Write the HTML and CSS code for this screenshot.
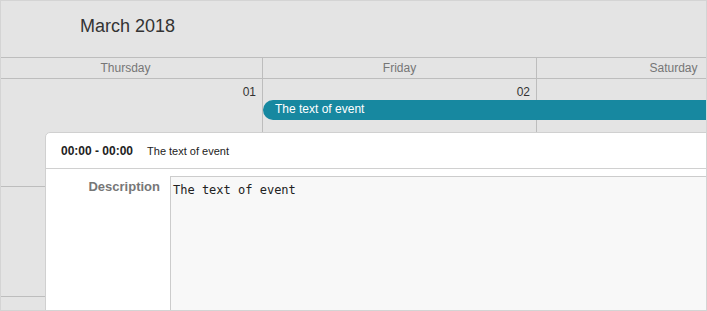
FILE: index.html
```html
<!doctype html>
<html lang="en">

<head>
    <meta charset="UTF-8" />
    <meta name="viewport" content="width=device-width, initial-scale=1.0" />
    <title>Calendar - March 2018</title>
    <link rel="stylesheet" href="styles.css">
</head>

<body>
    <div class="calendar">
        <div class="cal-header">
            <p class="cal-title">March 2018</p>
        </div>
        <div class="day-names">
            <div class="day-name">Thursday</div>
            <div class="day-name">Friday</div>
            <div class="day-name">Saturday</div>
        </div>
        <div class="week week-first">
            <div class="day-cell"><span class="day-number">01</span></div>
            <div class="day-cell"><span class="day-number">02</span></div>
            <div class="day-cell"></div>
            <div class="event-bar">The text of event</div>
        </div>
        <div class="week week-second">
            <div class="day-cell"></div>
            <div class="day-cell"></div>
            <div class="day-cell"></div>
        </div>
        <div class="week">
            <div class="day-cell"></div>
            <div class="day-cell"></div>
            <div class="day-cell"></div>
        </div>

        <div class="event-popup">
            <div class="popup-head">
                <span class="popup-time">00:00 - 00:00</span>
                <span class="popup-text">The text of event</span>
            </div>
            <div class="popup-body">
                <label class="popup-label" for="event-description">Description</label>
                <textarea class="popup-textarea" id="event-description" readonly>The text of event</textarea>
            </div>
        </div>
    </div>
</body>

</html>
```

FILE: styles.css
```css
body {
    font-family: "Liberation Sans", Arial, sans-serif;
    margin: 0;
    padding: 0;
    background-color: #ffffff;
}

.calendar {
    position: relative;
    width: 707px;
    height: 311px;
    box-sizing: border-box;
    border: 1px solid #d4d4d4;
    background-color: #e4e4e4;
    overflow: hidden;
}

.cal-header {
    height: 56px;
    border-bottom: 1px solid #bdbdbd;
    box-sizing: content-box;
}

.cal-title {
    margin: 0;
    padding: 15px 0 0 79px;
    font-size: 18px;
    color: #333333;
}

.day-names {
    display: flex;
    margin-left: -12px;
    height: 20px;
    border-bottom: 1px solid #bdbdbd;
}

.day-name {
    flex: 0 0 274px;
    box-sizing: border-box;
    border-right: 1px solid #bdbdbd;
    text-align: center;
    font-size: 12px;
    line-height: 20px;
    color: #767676;
}

.week {
    position: relative;
    display: flex;
    margin-left: -12px;
    height: 109px;
    border-bottom: 1px solid #bdbdbd;
}

.week-first {
    height: 107px;
}

.day-cell {
    flex: 0 0 274px;
    box-sizing: border-box;
    border-right: 1px solid #bdbdbd;
    padding: 3px 6px 0 0;
    text-align: right;
}

.day-number {
    font-size: 12px;
    line-height: 14px;
    color: #333333;
}

.event-bar {
    position: absolute;
    left: 274px;
    top: 21px;
    width: 700px;
    height: 20px;
    padding-left: 12px;
    border-radius: 10px 0 0 10px;
    background-color: #1788a0;
    color: #ffffff;
    font-size: 12px;
    line-height: 19px;
}

.event-popup {
    position: absolute;
    left: 44px;
    top: 131px;
    width: 800px;
    height: 300px;
    background-color: #ffffff;
    border: 1px solid #d0d0d0;
    border-radius: 5px 0 0 0;
}

.popup-head {
    height: 35px;
    padding-left: 15px;
    border-bottom: 1px solid #d0d0d0;
    display: flex;
    align-items: center;
    gap: 14px;
    color: #222222;
}

.popup-time {
    font-weight: bold;
    font-size: 12px;
}

.popup-text {
    font-size: 11px;
}

.popup-body {
    display: flex;
    gap: 10px;
    padding-top: 7px;
}

.popup-label {
    flex: 0 0 114px;
    padding-top: 3px;
    text-align: right;
    font-size: 13px;
    font-weight: bold;
    color: #777777;
}

.popup-textarea {
    flex: 1;
    height: 200px;
    margin: 0;
    padding: 6px 2px;
    border: 1px solid #cccccc;
    background-color: #f8f8f8;
    font-family: "DejaVu Sans Mono", monospace;
    font-size: 12px;
    color: #222222;
    resize: none;
    outline: none;
}
```
